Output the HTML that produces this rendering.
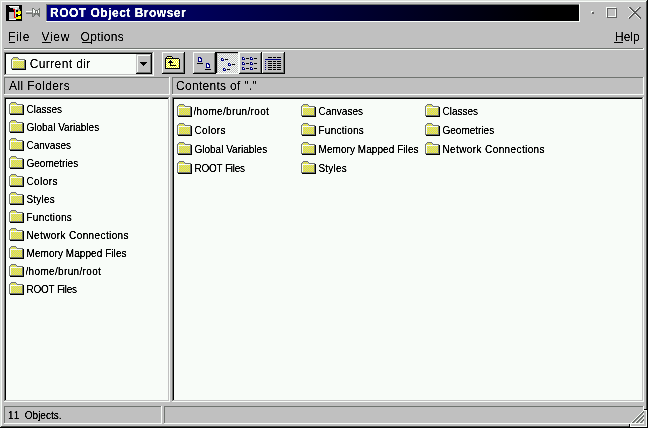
<!DOCTYPE html>
<html lang="en"><head><meta charset="utf-8"><title>ROOT Object Browser</title>
<style>
html,body{margin:0;padding:0;}
body{width:648px;height:428px;overflow:hidden;background:#c0c0c0;position:relative;font-family:"Liberation Sans",sans-serif;color:#000;}
.t{position:absolute;white-space:nowrap;line-height:14px;filter:url(#crisp);}
.m{font-size:12px;filter:url(#crisp2);}
.s{font-size:10px;line-height:12px;}
.ttl{font-size:12px;font-weight:bold;color:#f8fcf8;letter-spacing:0.5px;line-height:14px;}
u{text-decoration:underline;}
</style></head><body>
<svg width="648" height="428" viewBox="0 0 648 428" shape-rendering="crispEdges" style="position:absolute;left:0;top:0">
<defs><pattern id="ck" width="2" height="2" patternUnits="userSpaceOnUse"><rect width="2" height="2" fill="#c0c0c0"/><rect width="1" height="1" fill="#f8fcf8"/><rect x="1" y="1" width="1" height="1" fill="#f8fcf8"/></pattern>
<filter id="crisp" x="0" y="0" width="1" height="1" color-interpolation-filters="sRGB"><feComponentTransfer><feFuncA type="table" tableValues="0 0.15 0.9 1 1"/></feComponentTransfer></filter>
<filter id="crisp2" x="0" y="0" width="1" height="1" color-interpolation-filters="sRGB"><feComponentTransfer><feFuncA type="table" tableValues="0 0 0.7 1 1"/></feComponentTransfer></filter>
<linearGradient id="tg" x1="0" x2="1" y1="0" y2="0"><stop offset="0" stop-color="#000080"/><stop offset="0.94" stop-color="#000000"/><stop offset="1" stop-color="#000000"/></linearGradient></defs>
<rect x="46" y="4" width="534" height="18" fill="#f8fcf8"/>
<rect x="46" y="4" width="533" height="17" fill="#707470"/>
<rect x="47" y="5" width="532" height="16" fill="url(#tg)"/>
<rect x="0" y="0" width="647" height="1" fill="#dce0dc"/>
<rect x="0" y="0" width="1" height="427" fill="#dce0dc"/>
<rect x="1" y="1" width="645" height="1" fill="#f8fcf8"/>
<rect x="1" y="1" width="1" height="425" fill="#f8fcf8"/>
<rect x="646" y="1" width="1" height="426" fill="#484c48"/>
<rect x="1" y="426" width="646" height="1" fill="#484c48"/>
<rect x="647" y="0" width="1" height="428" fill="#000000"/>
<rect x="0" y="427" width="648" height="1" fill="#000000"/>
<rect x="6" y="5" width="16" height="1" fill="#000000"/>
<rect x="6" y="6" width="3" height="1" fill="#000000"/>
<rect x="9" y="6" width="10" height="1" fill="#f8fcf8"/>
<rect x="19" y="6" width="3" height="1" fill="#000000"/>
<rect x="6" y="7" width="4" height="1" fill="#000000"/>
<rect x="10" y="7" width="9" height="1" fill="#d8dcd8"/>
<rect x="19" y="7" width="3" height="1" fill="#000000"/>
<rect x="6" y="8" width="7" height="1" fill="#000000"/>
<rect x="13" y="8" width="2" height="1" fill="#c0c0c0"/>
<rect x="15" y="8" width="2" height="1" fill="#f8fcf8"/>
<rect x="17" y="8" width="2" height="1" fill="#c0c0c0"/>
<rect x="19" y="8" width="3" height="1" fill="#000000"/>
<rect x="6" y="9" width="7" height="1" fill="#000000"/>
<rect x="13" y="9" width="2" height="1" fill="#f80000"/>
<rect x="15" y="9" width="2" height="1" fill="#c0d0d0"/>
<rect x="17" y="9" width="3" height="1" fill="#a0a4b0"/>
<rect x="20" y="9" width="2" height="1" fill="#000000"/>
<rect x="6" y="10" width="8" height="1" fill="#000000"/>
<rect x="14" y="10" width="1" height="1" fill="#f80000"/>
<rect x="15" y="10" width="1" height="1" fill="#c0d0d0"/>
<rect x="16" y="10" width="2" height="1" fill="#000000"/>
<rect x="18" y="10" width="2" height="1" fill="#a0a4b0"/>
<rect x="20" y="10" width="2" height="1" fill="#000000"/>
<rect x="6" y="11" width="8" height="1" fill="#000000"/>
<rect x="14" y="11" width="1" height="1" fill="#f80000"/>
<rect x="15" y="11" width="1" height="1" fill="#c0d0d0"/>
<rect x="16" y="11" width="2" height="1" fill="#000000"/>
<rect x="18" y="11" width="3" height="1" fill="#f8fc00"/>
<rect x="21" y="11" width="1" height="1" fill="#000000"/>
<rect x="6" y="12" width="3" height="1" fill="#000000"/>
<rect x="9" y="12" width="5" height="1" fill="#c0c0c0"/>
<rect x="14" y="12" width="1" height="1" fill="#f80000"/>
<rect x="15" y="12" width="1" height="1" fill="#c0d0d0"/>
<rect x="16" y="12" width="5" height="1" fill="#f8fc00"/>
<rect x="21" y="12" width="1" height="1" fill="#000000"/>
<rect x="6" y="13" width="3" height="1" fill="#000000"/>
<rect x="9" y="13" width="5" height="1" fill="#c0c0c0"/>
<rect x="14" y="13" width="1" height="1" fill="#f80000"/>
<rect x="15" y="13" width="1" height="1" fill="#c0d0d0"/>
<rect x="16" y="13" width="5" height="1" fill="#f8fc00"/>
<rect x="21" y="13" width="1" height="1" fill="#000000"/>
<rect x="6" y="14" width="3" height="1" fill="#000000"/>
<rect x="9" y="14" width="5" height="1" fill="#c0c0c0"/>
<rect x="14" y="14" width="1" height="1" fill="#f80000"/>
<rect x="15" y="14" width="1" height="1" fill="#c0d0d0"/>
<rect x="16" y="14" width="2" height="1" fill="#000000"/>
<rect x="18" y="14" width="2" height="1" fill="#f8fcf8"/>
<rect x="20" y="14" width="2" height="1" fill="#000000"/>
<rect x="6" y="15" width="3" height="1" fill="#000000"/>
<rect x="9" y="15" width="5" height="1" fill="#c0c0c0"/>
<rect x="14" y="15" width="1" height="1" fill="#f80000"/>
<rect x="15" y="15" width="1" height="1" fill="#c0d0d0"/>
<rect x="16" y="15" width="6" height="1" fill="#000000"/>
<rect x="6" y="16" width="3" height="1" fill="#000000"/>
<rect x="9" y="16" width="5" height="1" fill="#c0c0c0"/>
<rect x="14" y="16" width="1" height="1" fill="#f80000"/>
<rect x="15" y="16" width="1" height="1" fill="#c0d0d0"/>
<rect x="16" y="16" width="2" height="1" fill="#000000"/>
<rect x="18" y="16" width="3" height="1" fill="#f8fc00"/>
<rect x="21" y="16" width="1" height="1" fill="#000000"/>
<rect x="6" y="17" width="3" height="1" fill="#000000"/>
<rect x="9" y="17" width="5" height="1" fill="#c0c0c0"/>
<rect x="14" y="17" width="2" height="1" fill="#f80000"/>
<rect x="16" y="17" width="5" height="1" fill="#f8fc00"/>
<rect x="21" y="17" width="1" height="1" fill="#000000"/>
<rect x="6" y="18" width="3" height="1" fill="#000000"/>
<rect x="9" y="18" width="5" height="1" fill="#c0c0c0"/>
<rect x="14" y="18" width="2" height="1" fill="#c0d0d0"/>
<rect x="16" y="18" width="5" height="1" fill="#f8fc00"/>
<rect x="21" y="18" width="1" height="1" fill="#000000"/>
<rect x="6" y="19" width="3" height="1" fill="#000000"/>
<rect x="9" y="19" width="7" height="1" fill="#f8fcf8"/>
<rect x="16" y="19" width="6" height="1" fill="#000000"/>
<rect x="6" y="20" width="16" height="1" fill="#000000"/>
<rect x="26" y="11" width="6" height="1" fill="#f8fcf8"/>
<rect x="26" y="12" width="6" height="1" fill="#a0a0a0"/>
<rect x="26" y="13" width="6" height="1" fill="#707470"/>
<rect x="32" y="8" width="2" height="1" fill="#707470"/>
<rect x="39" y="8" width="1" height="1" fill="#707470"/>
<rect x="32" y="9" width="1" height="1" fill="#707470"/>
<rect x="33" y="9" width="1" height="1" fill="#f8fcf8"/>
<rect x="34" y="9" width="1" height="1" fill="#707470"/>
<rect x="38" y="9" width="2" height="1" fill="#707470"/>
<rect x="32" y="10" width="1" height="1" fill="#707470"/>
<rect x="33" y="10" width="2" height="1" fill="#f8fcf8"/>
<rect x="35" y="10" width="3" height="1" fill="#707470"/>
<rect x="38" y="10" width="1" height="1" fill="#f8fcf8"/>
<rect x="39" y="10" width="1" height="1" fill="#707470"/>
<rect x="32" y="11" width="1" height="1" fill="#707470"/>
<rect x="33" y="11" width="2" height="1" fill="#f8fcf8"/>
<rect x="35" y="11" width="1" height="1" fill="#707470"/>
<rect x="36" y="11" width="1" height="1" fill="#f8fcf8"/>
<rect x="37" y="11" width="1" height="1" fill="#707470"/>
<rect x="38" y="11" width="1" height="1" fill="#f8fcf8"/>
<rect x="39" y="11" width="1" height="1" fill="#707470"/>
<rect x="32" y="12" width="1" height="1" fill="#707470"/>
<rect x="33" y="12" width="2" height="1" fill="#f8fcf8"/>
<rect x="35" y="12" width="1" height="1" fill="#707470"/>
<rect x="36" y="12" width="1" height="1" fill="#f8fcf8"/>
<rect x="37" y="12" width="1" height="1" fill="#707470"/>
<rect x="38" y="12" width="1" height="1" fill="#f8fcf8"/>
<rect x="39" y="12" width="1" height="1" fill="#707470"/>
<rect x="32" y="13" width="1" height="1" fill="#707470"/>
<rect x="33" y="13" width="1" height="1" fill="#a0a0a0"/>
<rect x="34" y="13" width="6" height="1" fill="#707470"/>
<rect x="32" y="14" width="1" height="1" fill="#707470"/>
<rect x="33" y="14" width="1" height="1" fill="#a0a0a0"/>
<rect x="34" y="14" width="2" height="1" fill="#707470"/>
<rect x="36" y="14" width="1" height="1" fill="#a0a0a0"/>
<rect x="37" y="14" width="3" height="1" fill="#707470"/>
<rect x="32" y="15" width="1" height="1" fill="#707470"/>
<rect x="33" y="15" width="1" height="1" fill="#a0a0a0"/>
<rect x="34" y="15" width="1" height="1" fill="#707470"/>
<rect x="38" y="15" width="2" height="1" fill="#707470"/>
<rect x="32" y="16" width="2" height="1" fill="#707470"/>
<rect x="39" y="16" width="1" height="1" fill="#707470"/>
<rect x="591" y="11" width="2" height="2" fill="#f8fcf8"/>
<rect x="592" y="12" width="2" height="2" fill="#606060"/>
<rect x="606" y="7" width="10" height="1" fill="#f8fcf8"/>
<rect x="606" y="16" width="10" height="1" fill="#f8fcf8"/>
<rect x="606" y="7" width="1" height="10" fill="#f8fcf8"/>
<rect x="615" y="7" width="1" height="10" fill="#f8fcf8"/>
<rect x="607" y="8" width="10" height="1" fill="#606060"/>
<rect x="607" y="17" width="10" height="1" fill="#606060"/>
<rect x="607" y="8" width="1" height="10" fill="#606060"/>
<rect x="616" y="8" width="1" height="10" fill="#606060"/>
<rect x="628" y="7" width="1" height="1" fill="#f8fcf8"/>
<rect x="638" y="7" width="1" height="1" fill="#f8fcf8"/>
<rect x="629" y="8" width="1" height="1" fill="#f8fcf8"/>
<rect x="637" y="8" width="1" height="1" fill="#f8fcf8"/>
<rect x="630" y="9" width="1" height="1" fill="#f8fcf8"/>
<rect x="636" y="9" width="1" height="1" fill="#f8fcf8"/>
<rect x="631" y="10" width="1" height="1" fill="#f8fcf8"/>
<rect x="635" y="10" width="1" height="1" fill="#f8fcf8"/>
<rect x="632" y="11" width="1" height="1" fill="#f8fcf8"/>
<rect x="634" y="11" width="1" height="1" fill="#f8fcf8"/>
<rect x="633" y="12" width="1" height="1" fill="#f8fcf8"/>
<rect x="633" y="12" width="1" height="1" fill="#f8fcf8"/>
<rect x="634" y="13" width="1" height="1" fill="#f8fcf8"/>
<rect x="632" y="13" width="1" height="1" fill="#f8fcf8"/>
<rect x="635" y="14" width="1" height="1" fill="#f8fcf8"/>
<rect x="631" y="14" width="1" height="1" fill="#f8fcf8"/>
<rect x="636" y="15" width="1" height="1" fill="#f8fcf8"/>
<rect x="630" y="15" width="1" height="1" fill="#f8fcf8"/>
<rect x="637" y="16" width="1" height="1" fill="#f8fcf8"/>
<rect x="629" y="16" width="1" height="1" fill="#f8fcf8"/>
<rect x="638" y="17" width="1" height="1" fill="#f8fcf8"/>
<rect x="628" y="17" width="1" height="1" fill="#f8fcf8"/>
<rect x="639" y="18" width="1" height="1" fill="#f8fcf8"/>
<rect x="629" y="7" width="1" height="1" fill="#585858"/>
<rect x="640" y="7" width="1" height="1" fill="#585858"/>
<rect x="630" y="7" width="1" height="1" fill="#585858"/>
<rect x="639" y="7" width="1" height="1" fill="#585858"/>
<rect x="630" y="8" width="1" height="1" fill="#585858"/>
<rect x="639" y="8" width="1" height="1" fill="#585858"/>
<rect x="631" y="8" width="1" height="1" fill="#585858"/>
<rect x="638" y="8" width="1" height="1" fill="#585858"/>
<rect x="631" y="9" width="1" height="1" fill="#585858"/>
<rect x="638" y="9" width="1" height="1" fill="#585858"/>
<rect x="632" y="9" width="1" height="1" fill="#585858"/>
<rect x="637" y="9" width="1" height="1" fill="#585858"/>
<rect x="632" y="10" width="1" height="1" fill="#585858"/>
<rect x="637" y="10" width="1" height="1" fill="#585858"/>
<rect x="633" y="10" width="1" height="1" fill="#585858"/>
<rect x="636" y="10" width="1" height="1" fill="#585858"/>
<rect x="633" y="11" width="1" height="1" fill="#585858"/>
<rect x="636" y="11" width="1" height="1" fill="#585858"/>
<rect x="634" y="11" width="1" height="1" fill="#585858"/>
<rect x="635" y="11" width="1" height="1" fill="#585858"/>
<rect x="634" y="12" width="1" height="1" fill="#585858"/>
<rect x="635" y="12" width="1" height="1" fill="#585858"/>
<rect x="635" y="12" width="1" height="1" fill="#585858"/>
<rect x="634" y="12" width="1" height="1" fill="#585858"/>
<rect x="635" y="13" width="1" height="1" fill="#585858"/>
<rect x="634" y="13" width="1" height="1" fill="#585858"/>
<rect x="636" y="13" width="1" height="1" fill="#585858"/>
<rect x="633" y="13" width="1" height="1" fill="#585858"/>
<rect x="636" y="14" width="1" height="1" fill="#585858"/>
<rect x="633" y="14" width="1" height="1" fill="#585858"/>
<rect x="637" y="14" width="1" height="1" fill="#585858"/>
<rect x="632" y="14" width="1" height="1" fill="#585858"/>
<rect x="637" y="15" width="1" height="1" fill="#585858"/>
<rect x="632" y="15" width="1" height="1" fill="#585858"/>
<rect x="638" y="15" width="1" height="1" fill="#585858"/>
<rect x="631" y="15" width="1" height="1" fill="#585858"/>
<rect x="638" y="16" width="1" height="1" fill="#585858"/>
<rect x="631" y="16" width="1" height="1" fill="#585858"/>
<rect x="639" y="16" width="1" height="1" fill="#585858"/>
<rect x="630" y="16" width="1" height="1" fill="#585858"/>
<rect x="639" y="17" width="1" height="1" fill="#585858"/>
<rect x="630" y="17" width="1" height="1" fill="#585858"/>
<rect x="640" y="17" width="1" height="1" fill="#585858"/>
<rect x="629" y="17" width="1" height="1" fill="#585858"/>
<rect x="640" y="18" width="1" height="1" fill="#585858"/>
<rect x="629" y="18" width="1" height="1" fill="#585858"/>
<rect x="9" y="42" width="6" height="1" fill="#000000"/>
<rect x="42" y="42" width="9" height="1" fill="#000000"/>
<rect x="82" y="42" width="9" height="1" fill="#000000"/>
<rect x="614" y="42" width="9" height="1" fill="#000000"/>
<rect x="4" y="48" width="639" height="1" fill="#707470"/>
<rect x="4" y="49" width="640" height="1" fill="#f8fcf8"/>
<rect x="643" y="48" width="1" height="1" fill="#f8fcf8"/>
<rect x="4" y="52" width="150" height="24" fill="#f8fcf8"/>
<rect x="4" y="52" width="150" height="1" fill="#707470"/>
<rect x="4" y="52" width="1" height="24" fill="#707470"/>
<rect x="5" y="53" width="148" height="1" fill="#000000"/>
<rect x="5" y="53" width="1" height="22" fill="#000000"/>
<rect x="5" y="74" width="148" height="1" fill="#c0c0c0"/>
<rect x="152" y="53" width="1" height="22" fill="#c0c0c0"/>
<rect x="4" y="75" width="150" height="1" fill="#f8fcf8"/>
<rect x="153" y="52" width="1" height="24" fill="#f8fcf8"/>
<rect x="136" y="54" width="16" height="20" fill="#c0c0c0"/>
<rect x="137" y="55" width="14" height="1" fill="#f8fcf8"/>
<rect x="137" y="55" width="1" height="18" fill="#f8fcf8"/>
<rect x="137" y="72" width="14" height="1" fill="#707470"/>
<rect x="150" y="55" width="1" height="18" fill="#707470"/>
<rect x="136" y="73" width="16" height="1" fill="#000000"/>
<rect x="151" y="54" width="1" height="20" fill="#000000"/>
<rect x="140" y="62" width="7" height="1" fill="#000000"/>
<rect x="141" y="63" width="5" height="1" fill="#000000"/>
<rect x="142" y="64" width="3" height="1" fill="#000000"/>
<rect x="143" y="65" width="1" height="1" fill="#000000"/>
<rect x="162" y="52" width="23" height="1" fill="#f8fcf8"/>
<rect x="162" y="52" width="1" height="22" fill="#f8fcf8"/>
<rect x="163" y="72" width="21" height="1" fill="#707470"/>
<rect x="183" y="53" width="1" height="20" fill="#707470"/>
<rect x="162" y="73" width="23" height="1" fill="#000000"/>
<rect x="184" y="52" width="1" height="22" fill="#000000"/>
<rect x="193" y="52" width="23" height="1" fill="#f8fcf8"/>
<rect x="193" y="52" width="1" height="22" fill="#f8fcf8"/>
<rect x="194" y="72" width="21" height="1" fill="#707470"/>
<rect x="214" y="53" width="1" height="20" fill="#707470"/>
<rect x="193" y="73" width="23" height="1" fill="#000000"/>
<rect x="215" y="52" width="1" height="22" fill="#000000"/>
<rect x="216" y="52" width="23" height="1" fill="#000000"/>
<rect x="216" y="52" width="1" height="22" fill="#000000"/>
<rect x="216" y="73" width="23" height="1" fill="#f8fcf8"/>
<rect x="238" y="52" width="1" height="22" fill="#f8fcf8"/>
<rect x="239" y="52" width="23" height="1" fill="#f8fcf8"/>
<rect x="239" y="52" width="1" height="22" fill="#f8fcf8"/>
<rect x="240" y="72" width="21" height="1" fill="#707470"/>
<rect x="260" y="53" width="1" height="20" fill="#707470"/>
<rect x="239" y="73" width="23" height="1" fill="#000000"/>
<rect x="261" y="52" width="1" height="22" fill="#000000"/>
<rect x="262" y="52" width="23" height="1" fill="#f8fcf8"/>
<rect x="262" y="52" width="1" height="22" fill="#f8fcf8"/>
<rect x="263" y="72" width="21" height="1" fill="#707470"/>
<rect x="283" y="53" width="1" height="20" fill="#707470"/>
<rect x="262" y="73" width="23" height="1" fill="#000000"/>
<rect x="284" y="52" width="1" height="22" fill="#000000"/>
<rect x="167" y="56" width="5" height="1" fill="#000000"/>
<rect x="166" y="57" width="1" height="1" fill="#000000"/>
<rect x="167" y="57" width="1" height="1" fill="#f8fcf8"/>
<rect x="168" y="57" width="1" height="1" fill="#f8fc00"/>
<rect x="169" y="57" width="1" height="1" fill="#f8fcf8"/>
<rect x="170" y="57" width="1" height="1" fill="#f8fc00"/>
<rect x="171" y="57" width="1" height="1" fill="#f8fcf8"/>
<rect x="172" y="57" width="1" height="1" fill="#000000"/>
<rect x="165" y="58" width="14" height="1" fill="#000000"/>
<rect x="165" y="59" width="1" height="1" fill="#000000"/>
<rect x="166" y="59" width="1" height="1" fill="#f8fcf8"/>
<rect x="167" y="59" width="1" height="1" fill="#f8fc00"/>
<rect x="168" y="59" width="1" height="1" fill="#f8fcf8"/>
<rect x="169" y="59" width="1" height="1" fill="#f8fc00"/>
<rect x="170" y="59" width="1" height="1" fill="#f8fcf8"/>
<rect x="171" y="59" width="1" height="1" fill="#f8fc00"/>
<rect x="172" y="59" width="1" height="1" fill="#f8fcf8"/>
<rect x="173" y="59" width="1" height="1" fill="#f8fc00"/>
<rect x="174" y="59" width="1" height="1" fill="#f8fcf8"/>
<rect x="175" y="59" width="1" height="1" fill="#f8fc00"/>
<rect x="176" y="59" width="1" height="1" fill="#f8fcf8"/>
<rect x="177" y="59" width="1" height="1" fill="#f8fc00"/>
<rect x="178" y="59" width="1" height="1" fill="#f8fcf8"/>
<rect x="179" y="59" width="1" height="1" fill="#000000"/>
<rect x="165" y="60" width="1" height="1" fill="#000000"/>
<rect x="166" y="60" width="1" height="1" fill="#f8fc00"/>
<rect x="167" y="60" width="1" height="1" fill="#f8fcf8"/>
<rect x="168" y="60" width="1" height="1" fill="#f8fc00"/>
<rect x="169" y="60" width="1" height="1" fill="#f8fcf8"/>
<rect x="170" y="60" width="1" height="1" fill="#000000"/>
<rect x="171" y="60" width="1" height="1" fill="#f8fcf8"/>
<rect x="172" y="60" width="1" height="1" fill="#f8fc00"/>
<rect x="173" y="60" width="1" height="1" fill="#f8fcf8"/>
<rect x="174" y="60" width="1" height="1" fill="#f8fc00"/>
<rect x="175" y="60" width="1" height="1" fill="#f8fcf8"/>
<rect x="176" y="60" width="1" height="1" fill="#f8fc00"/>
<rect x="177" y="60" width="1" height="1" fill="#f8fcf8"/>
<rect x="178" y="60" width="1" height="1" fill="#f8fc00"/>
<rect x="179" y="60" width="1" height="1" fill="#000000"/>
<rect x="165" y="61" width="1" height="1" fill="#000000"/>
<rect x="166" y="61" width="1" height="1" fill="#f8fcf8"/>
<rect x="167" y="61" width="1" height="1" fill="#f8fc00"/>
<rect x="168" y="61" width="1" height="1" fill="#f8fcf8"/>
<rect x="169" y="61" width="3" height="1" fill="#000000"/>
<rect x="172" y="61" width="1" height="1" fill="#f8fcf8"/>
<rect x="173" y="61" width="1" height="1" fill="#f8fc00"/>
<rect x="174" y="61" width="1" height="1" fill="#f8fcf8"/>
<rect x="175" y="61" width="1" height="1" fill="#f8fc00"/>
<rect x="176" y="61" width="1" height="1" fill="#f8fcf8"/>
<rect x="177" y="61" width="1" height="1" fill="#f8fc00"/>
<rect x="178" y="61" width="1" height="1" fill="#f8fcf8"/>
<rect x="179" y="61" width="1" height="1" fill="#000000"/>
<rect x="165" y="62" width="1" height="1" fill="#000000"/>
<rect x="166" y="62" width="1" height="1" fill="#f8fc00"/>
<rect x="167" y="62" width="1" height="1" fill="#f8fcf8"/>
<rect x="168" y="62" width="5" height="1" fill="#000000"/>
<rect x="173" y="62" width="1" height="1" fill="#f8fc00"/>
<rect x="174" y="62" width="1" height="1" fill="#f8fcf8"/>
<rect x="175" y="62" width="1" height="1" fill="#f8fc00"/>
<rect x="176" y="62" width="1" height="1" fill="#f8fcf8"/>
<rect x="177" y="62" width="1" height="1" fill="#f8fc00"/>
<rect x="178" y="62" width="1" height="1" fill="#f8fcf8"/>
<rect x="179" y="62" width="1" height="1" fill="#000000"/>
<rect x="165" y="63" width="1" height="1" fill="#000000"/>
<rect x="166" y="63" width="1" height="1" fill="#f8fcf8"/>
<rect x="167" y="63" width="1" height="1" fill="#f8fc00"/>
<rect x="168" y="63" width="1" height="1" fill="#f8fcf8"/>
<rect x="169" y="63" width="1" height="1" fill="#f8fc00"/>
<rect x="170" y="63" width="1" height="1" fill="#000000"/>
<rect x="171" y="63" width="1" height="1" fill="#f8fcf8"/>
<rect x="172" y="63" width="1" height="1" fill="#f8fc00"/>
<rect x="173" y="63" width="1" height="1" fill="#f8fcf8"/>
<rect x="174" y="63" width="1" height="1" fill="#f8fc00"/>
<rect x="175" y="63" width="1" height="1" fill="#f8fcf8"/>
<rect x="176" y="63" width="1" height="1" fill="#f8fc00"/>
<rect x="177" y="63" width="1" height="1" fill="#f8fcf8"/>
<rect x="178" y="63" width="1" height="1" fill="#f8fc00"/>
<rect x="179" y="63" width="1" height="1" fill="#000000"/>
<rect x="165" y="64" width="1" height="1" fill="#000000"/>
<rect x="166" y="64" width="1" height="1" fill="#f8fc00"/>
<rect x="167" y="64" width="1" height="1" fill="#f8fcf8"/>
<rect x="168" y="64" width="1" height="1" fill="#f8fc00"/>
<rect x="169" y="64" width="1" height="1" fill="#f8fcf8"/>
<rect x="170" y="64" width="1" height="1" fill="#000000"/>
<rect x="171" y="64" width="1" height="1" fill="#f8fc00"/>
<rect x="172" y="64" width="1" height="1" fill="#f8fcf8"/>
<rect x="173" y="64" width="1" height="1" fill="#f8fc00"/>
<rect x="174" y="64" width="1" height="1" fill="#f8fcf8"/>
<rect x="175" y="64" width="1" height="1" fill="#f8fc00"/>
<rect x="176" y="64" width="1" height="1" fill="#f8fcf8"/>
<rect x="177" y="64" width="1" height="1" fill="#f8fc00"/>
<rect x="178" y="64" width="1" height="1" fill="#f8fcf8"/>
<rect x="179" y="64" width="1" height="1" fill="#000000"/>
<rect x="165" y="65" width="1" height="1" fill="#000000"/>
<rect x="166" y="65" width="1" height="1" fill="#f8fcf8"/>
<rect x="167" y="65" width="1" height="1" fill="#f8fc00"/>
<rect x="168" y="65" width="1" height="1" fill="#f8fcf8"/>
<rect x="169" y="65" width="1" height="1" fill="#f8fc00"/>
<rect x="170" y="65" width="6" height="1" fill="#000000"/>
<rect x="176" y="65" width="1" height="1" fill="#f8fc00"/>
<rect x="177" y="65" width="1" height="1" fill="#f8fcf8"/>
<rect x="178" y="65" width="1" height="1" fill="#f8fc00"/>
<rect x="179" y="65" width="1" height="1" fill="#000000"/>
<rect x="165" y="66" width="1" height="1" fill="#000000"/>
<rect x="166" y="66" width="1" height="1" fill="#f8fc00"/>
<rect x="167" y="66" width="1" height="1" fill="#f8fcf8"/>
<rect x="168" y="66" width="1" height="1" fill="#f8fc00"/>
<rect x="169" y="66" width="1" height="1" fill="#f8fcf8"/>
<rect x="170" y="66" width="1" height="1" fill="#f8fc00"/>
<rect x="171" y="66" width="1" height="1" fill="#f8fcf8"/>
<rect x="172" y="66" width="1" height="1" fill="#f8fc00"/>
<rect x="173" y="66" width="1" height="1" fill="#f8fcf8"/>
<rect x="174" y="66" width="1" height="1" fill="#f8fc00"/>
<rect x="175" y="66" width="1" height="1" fill="#f8fcf8"/>
<rect x="176" y="66" width="1" height="1" fill="#f8fc00"/>
<rect x="177" y="66" width="1" height="1" fill="#f8fcf8"/>
<rect x="178" y="66" width="1" height="1" fill="#f8fc00"/>
<rect x="179" y="66" width="1" height="1" fill="#000000"/>
<rect x="165" y="67" width="1" height="1" fill="#000000"/>
<rect x="166" y="67" width="1" height="1" fill="#f8fcf8"/>
<rect x="167" y="67" width="1" height="1" fill="#f8fc00"/>
<rect x="168" y="67" width="1" height="1" fill="#f8fcf8"/>
<rect x="169" y="67" width="1" height="1" fill="#f8fc00"/>
<rect x="170" y="67" width="1" height="1" fill="#f8fcf8"/>
<rect x="171" y="67" width="1" height="1" fill="#f8fc00"/>
<rect x="172" y="67" width="1" height="1" fill="#f8fcf8"/>
<rect x="173" y="67" width="1" height="1" fill="#f8fc00"/>
<rect x="174" y="67" width="1" height="1" fill="#f8fcf8"/>
<rect x="175" y="67" width="1" height="1" fill="#f8fc00"/>
<rect x="176" y="67" width="1" height="1" fill="#f8fcf8"/>
<rect x="177" y="67" width="1" height="1" fill="#f8fc00"/>
<rect x="178" y="67" width="1" height="1" fill="#f8fcf8"/>
<rect x="179" y="67" width="1" height="1" fill="#000000"/>
<rect x="165" y="68" width="15" height="1" fill="#000000"/>
<rect x="198" y="57" width="3" height="1" fill="#000080"/>
<rect x="198" y="57" width="1" height="5" fill="#000080"/>
<rect x="198" y="61" width="4" height="1" fill="#000080"/>
<rect x="201" y="58" width="1" height="4" fill="#000080"/>
<rect x="199" y="58" width="1" height="1" fill="#f8fcf8"/>
<rect x="200" y="58" width="1" height="1" fill="#000080"/>
<rect x="199" y="59" width="2" height="2" fill="#f8fcf8"/>
<rect x="197" y="63" width="6" height="1" fill="#000000"/>
<rect x="206" y="63" width="3" height="1" fill="#000080"/>
<rect x="206" y="63" width="1" height="5" fill="#000080"/>
<rect x="206" y="67" width="4" height="1" fill="#000080"/>
<rect x="209" y="64" width="1" height="4" fill="#000080"/>
<rect x="207" y="64" width="1" height="1" fill="#f8fcf8"/>
<rect x="208" y="64" width="1" height="1" fill="#000080"/>
<rect x="207" y="65" width="2" height="2" fill="#f8fcf8"/>
<rect x="205" y="69" width="6" height="1" fill="#000000"/>
<rect x="242" y="57" width="3" height="3" fill="#000080"/>
<rect x="243" y="58" width="1" height="1" fill="#f8fcf8"/>
<rect x="244" y="57" width="1" height="1" fill="#c0c0c0"/>
<rect x="246" y="58" width="3" height="1" fill="#000000"/>
<rect x="250" y="57" width="3" height="3" fill="#000080"/>
<rect x="251" y="58" width="1" height="1" fill="#f8fcf8"/>
<rect x="252" y="57" width="1" height="1" fill="#c0c0c0"/>
<rect x="254" y="58" width="3" height="1" fill="#000000"/>
<rect x="242" y="62" width="3" height="3" fill="#000080"/>
<rect x="243" y="63" width="1" height="1" fill="#f8fcf8"/>
<rect x="244" y="62" width="1" height="1" fill="#c0c0c0"/>
<rect x="246" y="63" width="3" height="1" fill="#000000"/>
<rect x="250" y="62" width="3" height="3" fill="#000080"/>
<rect x="251" y="63" width="1" height="1" fill="#f8fcf8"/>
<rect x="252" y="62" width="1" height="1" fill="#c0c0c0"/>
<rect x="254" y="63" width="3" height="1" fill="#000000"/>
<rect x="242" y="67" width="3" height="3" fill="#000080"/>
<rect x="243" y="68" width="1" height="1" fill="#f8fcf8"/>
<rect x="244" y="67" width="1" height="1" fill="#c0c0c0"/>
<rect x="246" y="68" width="3" height="1" fill="#000000"/>
<rect x="250" y="67" width="3" height="3" fill="#000080"/>
<rect x="251" y="68" width="1" height="1" fill="#f8fcf8"/>
<rect x="252" y="67" width="1" height="1" fill="#c0c0c0"/>
<rect x="254" y="68" width="3" height="1" fill="#000000"/>
<rect x="268" y="57" width="4" height="1" fill="#000000"/>
<rect x="268" y="61" width="4" height="1" fill="#000000"/>
<rect x="268" y="63" width="4" height="1" fill="#000000"/>
<rect x="268" y="65" width="4" height="1" fill="#000000"/>
<rect x="268" y="67" width="4" height="1" fill="#000000"/>
<rect x="268" y="69" width="4" height="1" fill="#000000"/>
<rect x="273" y="57" width="3" height="1" fill="#000000"/>
<rect x="273" y="61" width="3" height="1" fill="#000000"/>
<rect x="273" y="63" width="3" height="1" fill="#000000"/>
<rect x="273" y="65" width="3" height="1" fill="#000000"/>
<rect x="273" y="67" width="3" height="1" fill="#000000"/>
<rect x="273" y="69" width="3" height="1" fill="#000000"/>
<rect x="277" y="57" width="4" height="1" fill="#000000"/>
<rect x="277" y="61" width="4" height="1" fill="#000000"/>
<rect x="277" y="63" width="4" height="1" fill="#000000"/>
<rect x="277" y="65" width="4" height="1" fill="#000000"/>
<rect x="277" y="67" width="4" height="1" fill="#000000"/>
<rect x="277" y="69" width="4" height="1" fill="#000000"/>
<rect x="265" y="59" width="16" height="1" fill="#000080"/>
<rect x="265" y="61" width="1" height="1" fill="#000080"/>
<rect x="265" y="63" width="1" height="1" fill="#000080"/>
<rect x="265" y="65" width="1" height="1" fill="#000080"/>
<rect x="265" y="67" width="1" height="1" fill="#000080"/>
<rect x="265" y="69" width="1" height="1" fill="#000080"/>
<rect x="4" y="77" width="166" height="1" fill="#707470"/>
<rect x="4" y="77" width="1" height="18" fill="#707470"/>
<rect x="4" y="94" width="166" height="1" fill="#f8fcf8"/>
<rect x="169" y="77" width="1" height="18" fill="#f8fcf8"/>
<rect x="172" y="77" width="472" height="1" fill="#707470"/>
<rect x="172" y="77" width="1" height="18" fill="#707470"/>
<rect x="172" y="94" width="472" height="1" fill="#f8fcf8"/>
<rect x="643" y="77" width="1" height="18" fill="#f8fcf8"/>
<rect x="4" y="97" width="166" height="305" fill="#f8fcf8"/>
<rect x="4" y="97" width="166" height="1" fill="#707470"/>
<rect x="4" y="97" width="1" height="305" fill="#707470"/>
<rect x="5" y="98" width="164" height="1" fill="#000000"/>
<rect x="5" y="98" width="1" height="303" fill="#000000"/>
<rect x="5" y="400" width="164" height="1" fill="#c0c0c0"/>
<rect x="168" y="98" width="1" height="303" fill="#c0c0c0"/>
<rect x="4" y="401" width="166" height="1" fill="#f8fcf8"/>
<rect x="169" y="97" width="1" height="305" fill="#f8fcf8"/>
<rect x="172" y="97" width="472" height="305" fill="#f8fcf8"/>
<rect x="172" y="97" width="472" height="1" fill="#707470"/>
<rect x="172" y="97" width="1" height="305" fill="#707470"/>
<rect x="173" y="98" width="470" height="1" fill="#000000"/>
<rect x="173" y="98" width="1" height="303" fill="#000000"/>
<rect x="173" y="400" width="470" height="1" fill="#c0c0c0"/>
<rect x="642" y="98" width="1" height="303" fill="#c0c0c0"/>
<rect x="172" y="401" width="472" height="1" fill="#f8fcf8"/>
<rect x="643" y="97" width="1" height="305" fill="#f8fcf8"/>
<rect x="4" y="406" width="158" height="1" fill="#707470"/>
<rect x="4" y="406" width="1" height="18" fill="#707470"/>
<rect x="4" y="423" width="158" height="1" fill="#f8fcf8"/>
<rect x="161" y="406" width="1" height="18" fill="#f8fcf8"/>
<rect x="164" y="406" width="480" height="1" fill="#707470"/>
<rect x="164" y="406" width="1" height="18" fill="#707470"/>
<rect x="164" y="423" width="480" height="1" fill="#f8fcf8"/>
<rect x="643" y="406" width="1" height="18" fill="#f8fcf8"/>
<rect x="629" y="424" width="19" height="4" fill="#c0c0c0"/>
<rect x="644" y="409" width="4" height="19" fill="#c0c0c0"/>
<rect x="644" y="409" width="4" height="1" fill="#000000"/>
<rect x="644" y="410" width="3" height="1" fill="#f8fcf8"/>
<rect x="646" y="410" width="1" height="17" fill="#f8fcf8"/>
<rect x="647" y="409" width="1" height="19" fill="#000000"/>
<rect x="629" y="424" width="1" height="4" fill="#000000"/>
<rect x="630" y="424" width="1" height="3" fill="#f8fcf8"/>
<rect x="630" y="426" width="17" height="1" fill="#f8fcf8"/>
<rect x="629" y="427" width="19" height="1" fill="#000000"/>
<rect x="630" y="423" width="1" height="1" fill="#f8fcf8"/>
<rect x="631" y="422" width="1" height="1" fill="#f8fcf8"/>
<rect x="632" y="421" width="1" height="1" fill="#f8fcf8"/>
<rect x="633" y="420" width="1" height="1" fill="#f8fcf8"/>
<rect x="634" y="419" width="1" height="1" fill="#f8fcf8"/>
<rect x="635" y="418" width="1" height="1" fill="#f8fcf8"/>
<rect x="636" y="417" width="1" height="1" fill="#f8fcf8"/>
<rect x="637" y="416" width="1" height="1" fill="#f8fcf8"/>
<rect x="638" y="415" width="1" height="1" fill="#f8fcf8"/>
<rect x="639" y="414" width="1" height="1" fill="#f8fcf8"/>
<rect x="640" y="413" width="1" height="1" fill="#f8fcf8"/>
<rect x="641" y="412" width="1" height="1" fill="#f8fcf8"/>
<rect x="642" y="411" width="1" height="1" fill="#f8fcf8"/>
<rect x="643" y="410" width="1" height="1" fill="#f8fcf8"/>
<rect x="632" y="422" width="1" height="1" fill="#707470"/>
<rect x="633" y="421" width="1" height="1" fill="#707470"/>
<rect x="634" y="420" width="1" height="1" fill="#707470"/>
<rect x="635" y="419" width="1" height="1" fill="#707470"/>
<rect x="636" y="418" width="1" height="1" fill="#707470"/>
<rect x="637" y="417" width="1" height="1" fill="#707470"/>
<rect x="638" y="416" width="1" height="1" fill="#707470"/>
<rect x="639" y="415" width="1" height="1" fill="#707470"/>
<rect x="640" y="414" width="1" height="1" fill="#707470"/>
<rect x="641" y="413" width="1" height="1" fill="#707470"/>
<rect x="642" y="412" width="1" height="1" fill="#707470"/>
<rect x="643" y="411" width="1" height="1" fill="#707470"/>
<rect x="633" y="422" width="1" height="1" fill="#707470"/>
<rect x="634" y="421" width="1" height="1" fill="#707470"/>
<rect x="635" y="420" width="1" height="1" fill="#707470"/>
<rect x="636" y="419" width="1" height="1" fill="#707470"/>
<rect x="637" y="418" width="1" height="1" fill="#707470"/>
<rect x="638" y="417" width="1" height="1" fill="#707470"/>
<rect x="639" y="416" width="1" height="1" fill="#707470"/>
<rect x="640" y="415" width="1" height="1" fill="#707470"/>
<rect x="641" y="414" width="1" height="1" fill="#707470"/>
<rect x="642" y="413" width="1" height="1" fill="#707470"/>
<rect x="643" y="412" width="1" height="1" fill="#707470"/>
<rect x="635" y="422" width="1" height="1" fill="#f8fcf8"/>
<rect x="636" y="421" width="1" height="1" fill="#f8fcf8"/>
<rect x="637" y="420" width="1" height="1" fill="#f8fcf8"/>
<rect x="638" y="419" width="1" height="1" fill="#f8fcf8"/>
<rect x="639" y="418" width="1" height="1" fill="#f8fcf8"/>
<rect x="640" y="417" width="1" height="1" fill="#f8fcf8"/>
<rect x="641" y="416" width="1" height="1" fill="#f8fcf8"/>
<rect x="642" y="415" width="1" height="1" fill="#f8fcf8"/>
<rect x="643" y="414" width="1" height="1" fill="#f8fcf8"/>
<rect x="636" y="422" width="1" height="1" fill="#707470"/>
<rect x="637" y="421" width="1" height="1" fill="#707470"/>
<rect x="638" y="420" width="1" height="1" fill="#707470"/>
<rect x="639" y="419" width="1" height="1" fill="#707470"/>
<rect x="640" y="418" width="1" height="1" fill="#707470"/>
<rect x="641" y="417" width="1" height="1" fill="#707470"/>
<rect x="642" y="416" width="1" height="1" fill="#707470"/>
<rect x="643" y="415" width="1" height="1" fill="#707470"/>
<rect x="637" y="422" width="1" height="1" fill="#707470"/>
<rect x="638" y="421" width="1" height="1" fill="#707470"/>
<rect x="639" y="420" width="1" height="1" fill="#707470"/>
<rect x="640" y="419" width="1" height="1" fill="#707470"/>
<rect x="641" y="418" width="1" height="1" fill="#707470"/>
<rect x="642" y="417" width="1" height="1" fill="#707470"/>
<rect x="643" y="416" width="1" height="1" fill="#707470"/>
<rect x="639" y="422" width="1" height="1" fill="#f8fcf8"/>
<rect x="640" y="421" width="1" height="1" fill="#f8fcf8"/>
<rect x="641" y="420" width="1" height="1" fill="#f8fcf8"/>
<rect x="642" y="419" width="1" height="1" fill="#f8fcf8"/>
<rect x="643" y="418" width="1" height="1" fill="#f8fcf8"/>
<rect x="640" y="422" width="1" height="1" fill="#707470"/>
<rect x="641" y="421" width="1" height="1" fill="#707470"/>
<rect x="642" y="420" width="1" height="1" fill="#707470"/>
<rect x="643" y="419" width="1" height="1" fill="#707470"/>
<rect x="641" y="422" width="1" height="1" fill="#707470"/>
<rect x="642" y="421" width="1" height="1" fill="#707470"/>
<rect x="643" y="420" width="1" height="1" fill="#707470"/>
<defs><g id="fo"><rect x="3" y="1" width="5" height="1" fill="#707470"/><rect x="2" y="2" width="1" height="1" fill="#707470"/><rect x="3" y="2" width="1" height="1" fill="#c0c0c0"/><rect x="4" y="2" width="1" height="1" fill="#f8fc00"/><rect x="5" y="2" width="1" height="1" fill="#c0c0c0"/><rect x="6" y="2" width="1" height="1" fill="#f8fc00"/><rect x="7" y="2" width="1" height="1" fill="#c0c0c0"/><rect x="8" y="2" width="1" height="1" fill="#707470"/><rect x="1" y="3" width="1" height="1" fill="#707470"/><rect x="2" y="3" width="1" height="1" fill="#c0c0c0"/><rect x="3" y="3" width="1" height="1" fill="#f8fc00"/><rect x="4" y="3" width="1" height="1" fill="#c0c0c0"/><rect x="5" y="3" width="1" height="1" fill="#f8fc00"/><rect x="6" y="3" width="1" height="1" fill="#c0c0c0"/><rect x="7" y="3" width="1" height="1" fill="#f8fc00"/><rect x="8" y="3" width="1" height="1" fill="#c0c0c0"/><rect x="9" y="3" width="6" height="1" fill="#707470"/><rect x="1" y="4" width="1" height="1" fill="#707470"/><rect x="2" y="4" width="12" height="1" fill="#f8fcf8"/><rect x="14" y="4" width="1" height="1" fill="#707470"/><rect x="15" y="4" width="1" height="1" fill="#000000"/><rect x="1" y="5" width="1" height="1" fill="#707470"/><rect x="2" y="5" width="1" height="1" fill="#f8fcf8"/><rect x="3" y="5" width="1" height="1" fill="#f8fc00"/><rect x="4" y="5" width="1" height="1" fill="#c0c0c0"/><rect x="5" y="5" width="1" height="1" fill="#f8fc00"/><rect x="6" y="5" width="1" height="1" fill="#c0c0c0"/><rect x="7" y="5" width="1" height="1" fill="#f8fc00"/><rect x="8" y="5" width="1" height="1" fill="#c0c0c0"/><rect x="9" y="5" width="1" height="1" fill="#f8fc00"/><rect x="10" y="5" width="1" height="1" fill="#c0c0c0"/><rect x="11" y="5" width="1" height="1" fill="#f8fc00"/><rect x="12" y="5" width="1" height="1" fill="#c0c0c0"/><rect x="13" y="5" width="1" height="1" fill="#f8fc00"/><rect x="14" y="5" width="1" height="1" fill="#707470"/><rect x="15" y="5" width="1" height="1" fill="#000000"/><rect x="1" y="6" width="1" height="1" fill="#707470"/><rect x="2" y="6" width="1" height="1" fill="#f8fcf8"/><rect x="3" y="6" width="1" height="1" fill="#c0c0c0"/><rect x="4" y="6" width="1" height="1" fill="#f8fc00"/><rect x="5" y="6" width="1" height="1" fill="#c0c0c0"/><rect x="6" y="6" width="1" height="1" fill="#f8fc00"/><rect x="7" y="6" width="1" height="1" fill="#c0c0c0"/><rect x="8" y="6" width="1" height="1" fill="#f8fc00"/><rect x="9" y="6" width="1" height="1" fill="#c0c0c0"/><rect x="10" y="6" width="1" height="1" fill="#f8fc00"/><rect x="11" y="6" width="1" height="1" fill="#c0c0c0"/><rect x="12" y="6" width="1" height="1" fill="#f8fc00"/><rect x="13" y="6" width="1" height="1" fill="#c0c0c0"/><rect x="14" y="6" width="1" height="1" fill="#707470"/><rect x="15" y="6" width="1" height="1" fill="#000000"/><rect x="1" y="7" width="1" height="1" fill="#707470"/><rect x="2" y="7" width="1" height="1" fill="#f8fcf8"/><rect x="3" y="7" width="1" height="1" fill="#f8fc00"/><rect x="4" y="7" width="1" height="1" fill="#c0c0c0"/><rect x="5" y="7" width="1" height="1" fill="#f8fc00"/><rect x="6" y="7" width="1" height="1" fill="#c0c0c0"/><rect x="7" y="7" width="1" height="1" fill="#f8fc00"/><rect x="8" y="7" width="1" height="1" fill="#c0c0c0"/><rect x="9" y="7" width="1" height="1" fill="#f8fc00"/><rect x="10" y="7" width="1" height="1" fill="#c0c0c0"/><rect x="11" y="7" width="1" height="1" fill="#f8fc00"/><rect x="12" y="7" width="1" height="1" fill="#c0c0c0"/><rect x="13" y="7" width="1" height="1" fill="#f8fc00"/><rect x="14" y="7" width="1" height="1" fill="#707470"/><rect x="15" y="7" width="1" height="1" fill="#000000"/><rect x="1" y="8" width="1" height="1" fill="#707470"/><rect x="2" y="8" width="1" height="1" fill="#f8fcf8"/><rect x="3" y="8" width="1" height="1" fill="#c0c0c0"/><rect x="4" y="8" width="1" height="1" fill="#f8fc00"/><rect x="5" y="8" width="1" height="1" fill="#c0c0c0"/><rect x="6" y="8" width="1" height="1" fill="#f8fc00"/><rect x="7" y="8" width="1" height="1" fill="#c0c0c0"/><rect x="8" y="8" width="1" height="1" fill="#f8fc00"/><rect x="9" y="8" width="1" height="1" fill="#c0c0c0"/><rect x="10" y="8" width="1" height="1" fill="#f8fc00"/><rect x="11" y="8" width="1" height="1" fill="#c0c0c0"/><rect x="12" y="8" width="1" height="1" fill="#f8fc00"/><rect x="13" y="8" width="1" height="1" fill="#c0c0c0"/><rect x="14" y="8" width="1" height="1" fill="#707470"/><rect x="15" y="8" width="1" height="1" fill="#000000"/><rect x="1" y="9" width="1" height="1" fill="#707470"/><rect x="2" y="9" width="1" height="1" fill="#f8fcf8"/><rect x="3" y="9" width="1" height="1" fill="#f8fc00"/><rect x="4" y="9" width="1" height="1" fill="#c0c0c0"/><rect x="5" y="9" width="1" height="1" fill="#f8fc00"/><rect x="6" y="9" width="1" height="1" fill="#c0c0c0"/><rect x="7" y="9" width="1" height="1" fill="#f8fc00"/><rect x="8" y="9" width="1" height="1" fill="#c0c0c0"/><rect x="9" y="9" width="1" height="1" fill="#f8fc00"/><rect x="10" y="9" width="1" height="1" fill="#c0c0c0"/><rect x="11" y="9" width="1" height="1" fill="#f8fc00"/><rect x="12" y="9" width="1" height="1" fill="#c0c0c0"/><rect x="13" y="9" width="1" height="1" fill="#f8fc00"/><rect x="14" y="9" width="1" height="1" fill="#707470"/><rect x="15" y="9" width="1" height="1" fill="#000000"/><rect x="1" y="10" width="1" height="1" fill="#707470"/><rect x="2" y="10" width="1" height="1" fill="#f8fcf8"/><rect x="3" y="10" width="1" height="1" fill="#c0c0c0"/><rect x="4" y="10" width="1" height="1" fill="#f8fc00"/><rect x="5" y="10" width="1" height="1" fill="#c0c0c0"/><rect x="6" y="10" width="1" height="1" fill="#f8fc00"/><rect x="7" y="10" width="1" height="1" fill="#c0c0c0"/><rect x="8" y="10" width="1" height="1" fill="#f8fc00"/><rect x="9" y="10" width="1" height="1" fill="#c0c0c0"/><rect x="10" y="10" width="1" height="1" fill="#f8fc00"/><rect x="11" y="10" width="1" height="1" fill="#c0c0c0"/><rect x="12" y="10" width="1" height="1" fill="#f8fc00"/><rect x="13" y="10" width="1" height="1" fill="#c0c0c0"/><rect x="14" y="10" width="1" height="1" fill="#707470"/><rect x="15" y="10" width="1" height="1" fill="#000000"/><rect x="1" y="11" width="1" height="1" fill="#707470"/><rect x="2" y="11" width="1" height="1" fill="#f8fcf8"/><rect x="3" y="11" width="1" height="1" fill="#f8fc00"/><rect x="4" y="11" width="1" height="1" fill="#c0c0c0"/><rect x="5" y="11" width="1" height="1" fill="#f8fc00"/><rect x="6" y="11" width="1" height="1" fill="#c0c0c0"/><rect x="7" y="11" width="1" height="1" fill="#f8fc00"/><rect x="8" y="11" width="1" height="1" fill="#c0c0c0"/><rect x="9" y="11" width="1" height="1" fill="#f8fc00"/><rect x="10" y="11" width="1" height="1" fill="#c0c0c0"/><rect x="11" y="11" width="1" height="1" fill="#f8fc00"/><rect x="12" y="11" width="1" height="1" fill="#c0c0c0"/><rect x="13" y="11" width="1" height="1" fill="#f8fc00"/><rect x="14" y="11" width="1" height="1" fill="#707470"/><rect x="15" y="11" width="1" height="1" fill="#000000"/><rect x="1" y="12" width="14" height="1" fill="#707470"/><rect x="15" y="12" width="1" height="1" fill="#000000"/><rect x="2" y="13" width="14" height="1" fill="#000000"/></g></defs>
<use href="#fo" x="10" y="56"/>
<use href="#fo" x="8" y="101"/>
<use href="#fo" x="8" y="119"/>
<use href="#fo" x="8" y="137"/>
<use href="#fo" x="8" y="155"/>
<use href="#fo" x="8" y="173"/>
<use href="#fo" x="8" y="191"/>
<use href="#fo" x="8" y="209"/>
<use href="#fo" x="8" y="227"/>
<use href="#fo" x="8" y="245"/>
<use href="#fo" x="8" y="263"/>
<use href="#fo" x="8" y="281"/>
<use href="#fo" x="176" y="103"/>
<use href="#fo" x="176" y="122"/>
<use href="#fo" x="176" y="141"/>
<use href="#fo" x="176" y="160"/>
<use href="#fo" x="300" y="103"/>
<use href="#fo" x="300" y="122"/>
<use href="#fo" x="300" y="141"/>
<use href="#fo" x="300" y="160"/>
<use href="#fo" x="424" y="103"/>
<use href="#fo" x="424" y="122"/>
<use href="#fo" x="424" y="141"/>
<rect x="218" y="54" width="20" height="19" fill="url(#ck)"/>
<rect x="221" y="58" width="2" height="1" fill="#000080"/>
<rect x="221" y="59" width="3" height="2" fill="#000080"/>
<rect x="222" y="59" width="1" height="1" fill="#f8fcf8"/>
<rect x="225" y="59" width="3" height="1" fill="#000000"/>
<rect x="228" y="63" width="2" height="1" fill="#000080"/>
<rect x="228" y="64" width="3" height="2" fill="#000080"/>
<rect x="229" y="64" width="1" height="1" fill="#f8fcf8"/>
<rect x="232" y="64" width="3" height="1" fill="#000000"/>
<rect x="223" y="68" width="2" height="1" fill="#000080"/>
<rect x="223" y="69" width="3" height="2" fill="#000080"/>
<rect x="224" y="69" width="1" height="1" fill="#f8fcf8"/>
<rect x="227" y="69" width="3" height="1" fill="#000000"/>
</svg>
<div class="t ttl" style="left:50px;top:6px;">ROOT Object Browser</div>
<div class="t m" style="left:8px;top:30px;letter-spacing:0.67px">File</div>
<div class="t m" style="left:41.5px;top:30px;letter-spacing:0.67px">View</div>
<div class="t m" style="left:80.5px;top:30px;letter-spacing:0.33px">Options</div>
<div class="t m" style="left:615px;top:30px;">Help</div>
<div class="t m" style="left:29.7px;top:57px;letter-spacing:0.4px">Current dir</div>
<div class="t m" style="left:9px;top:79px;letter-spacing:0.4px">All Folders</div>
<div class="t m" style="left:176px;top:79px;letter-spacing:0.29px">Contents of "."</div>
<div class="t s" style="left:26.5px;top:104px;">Classes</div>
<div class="t s" style="left:26.5px;top:122px;">Global Variables</div>
<div class="t s" style="left:26.5px;top:140px;">Canvases</div>
<div class="t s" style="left:26.5px;top:158px;">Geometries</div>
<div class="t s" style="left:26.5px;top:176px;letter-spacing:0.4px">Colors</div>
<div class="t s" style="left:26.5px;top:194px;letter-spacing:0.2px">Styles</div>
<div class="t s" style="left:26.5px;top:212px;letter-spacing:0.25px">Functions</div>
<div class="t s" style="left:26.5px;top:230px;letter-spacing:0.39px">Network Connections</div>
<div class="t s" style="left:26.5px;top:248px;letter-spacing:0.06px">Memory Mapped Files</div>
<div class="t s" style="left:25.5px;top:266px;letter-spacing:0.34px">/home/brun/root</div>
<div class="t s" style="left:26.5px;top:284px;letter-spacing:-0.22px">ROOT Files</div>
<div class="t s" style="left:193.5px;top:106px;letter-spacing:0.34px">/home/brun/root</div>
<div class="t s" style="left:194.5px;top:125px;letter-spacing:0.4px">Colors</div>
<div class="t s" style="left:194.5px;top:144px;">Global Variables</div>
<div class="t s" style="left:194.5px;top:163px;letter-spacing:-0.22px">ROOT Files</div>
<div class="t s" style="left:318.5px;top:106px;">Canvases</div>
<div class="t s" style="left:318.5px;top:125px;letter-spacing:0.25px">Functions</div>
<div class="t s" style="left:318.5px;top:144px;letter-spacing:0.06px">Memory Mapped Files</div>
<div class="t s" style="left:318.5px;top:163px;letter-spacing:0.2px">Styles</div>
<div class="t s" style="left:442.5px;top:106px;">Classes</div>
<div class="t s" style="left:442.5px;top:125px;">Geometries</div>
<div class="t s" style="left:442.5px;top:144px;letter-spacing:0.39px">Network Connections</div>
<div class="t s" style="left:7.9px;top:410px;word-spacing:1.75px"><span style="letter-spacing:1px">11</span> Objects.</div>
</body></html>
